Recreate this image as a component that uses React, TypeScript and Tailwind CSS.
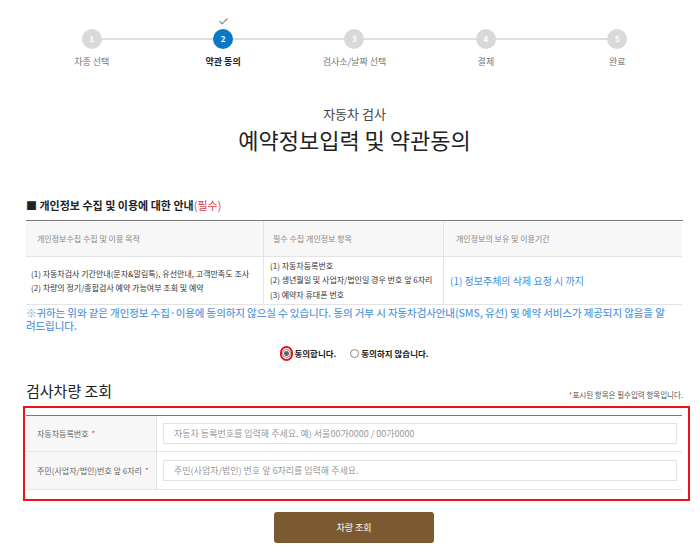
import { Check } from 'lucide-react';

const steps = [
  { no: 1, label: '차종 선택' },
  { no: 2, label: '약관 동의' },
  { no: 3, label: '검사소/날짜 선택' },
  { no: 4, label: '결제' },
  { no: 5, label: '완료' },
];

const current = 2;

function Radio({ checked }: { checked?: boolean }) {
  return (
    <span className="w-[9px] h-[9px] rounded-full border border-[#888] bg-white flex items-center justify-center">
      {checked && <span className="w-[5px] h-[5px] rounded-full bg-[#666]" />}
    </span>
  );
}

export default function App() {
  return (
    <div
      className="w-[700px] h-[545px] bg-white overflow-hidden text-[#333]"
      style={{ fontFamily: '"Noto Sans CJK KR", "Noto Sans", sans-serif' }}
    >
      <div className="ml-[26px] w-[657px]">
        {/* Steps */}
        <div className="relative pt-[16px]">
          <div className="absolute left-[66px] right-[66px] top-[38px] h-[2px] bg-[#dedede]" />
          <div className="grid grid-cols-5">
            {steps.map((s) => {
              const active = s.no === current;
              return (
                <div key={s.no} className="flex flex-col items-center">
                  <div className="h-[10px] flex items-center justify-center">
                    {active && <Check className="w-[11px] h-[11px] text-[#8a8a8a]" strokeWidth={2.5} />}
                  </div>
                  <div
                    className={`relative mt-[3px] w-[20px] h-[20px] rounded-full flex items-center justify-center text-[8px] font-bold text-white ${
                      active ? 'bg-[#0a78c8]' : 'bg-[#d9d9d9]'
                    }`}
                  >
                    {s.no}
                  </div>
                  <div
                    className={`mt-[7px] text-[9px] leading-[12px] ${
                      active ? 'text-[#222] font-bold' : 'text-[#777]'
                    }`}
                  >
                    {s.label}
                  </div>
                </div>
              );
            })}
          </div>
        </div>

        {/* Title */}
        <div className="mt-[37px] text-center">
          <div className="text-[13px] leading-[18px] text-[#444]">자동차 검사</div>
          <h1 className="mt-[1px] text-[22px] leading-[30px] text-[#222]">예약정보입력 및 약관동의</h1>
        </div>

        {/* Privacy */}
        <div className="mt-[43px] text-[11px] leading-[16px] font-bold text-[#222]">
          ■ 개인정보 수집 및 이용에 대한 안내<span className="text-[#e04040] font-normal">(필수)</span>
        </div>

        <div className="mt-[7px] border-t border-[#777] grid grid-cols-[238px_180px_238px] text-[8px]">
          <div className="h-[36px] bg-[#f7f7f7] border-b border-r border-[#e3e3e3] flex items-center pl-[11px] text-[#888]">
            개인정보수집 수집 및 이용 목적
          </div>
          <div className="h-[36px] bg-[#f7f7f7] border-b border-r border-[#e3e3e3] flex items-center pl-[9px] text-[#888]">
            필수 수집 개인정보 항목
          </div>
          <div className="h-[36px] bg-[#f7f7f7] border-b border-[#e3e3e3] flex items-center pl-[12px] text-[#888]">
            개인정보의 보유 및 이용기간
          </div>

          <div className="h-[48px] border-b border-r border-[#e3e3e3] flex flex-col justify-center pl-[5px] leading-[14px] text-[#333]">
            <div>(1) 자동차검사 기간안내(문자&amp;알림톡), 유선안내, 고객만족도 조사</div>
            <div>(2) 차량의 정기/종합검사 예약 가능여부 조회 및 예약</div>
          </div>
          <div className="h-[48px] border-b border-r border-[#e3e3e3] flex flex-col justify-center pl-[6px] leading-[14.5px] text-[#333]">
            <div>(1) 자동차등록번호</div>
            <div>(2) 생년월일 및 사업자/법인일 경우 번호 앞 6자리</div>
            <div>(3) 예약자 휴대폰 번호</div>
          </div>
          <div className="h-[48px] border-b border-[#e3e3e3] flex items-center pl-[6px] text-[10px] text-[#3f8ee0]">
            (1) 정보주체의 삭제 요청 시 까지
          </div>
        </div>

        <p className="mt-[1px] w-[640px] break-all text-[10.5px] leading-[13px] font-medium text-[#5a9be0] tracking-[-0.1px]">
          ※귀하는 위와 같은 개인정보 수집·이용에 동의하지 않으실 수 있습니다. 동의 거부 시 자동차검사안내(SMS, 유선) 및 예약 서비스가 제공되지 않음을 알려드립니다.
        </p>

        <div className="mt-[14px] h-[14px] flex items-center justify-center text-[8.5px] font-bold text-[#222]">
          <span className="w-[13px] h-[15px] rounded-full border-2 border-[#e8141c] flex items-center justify-center">
            <Radio checked />
          </span>
          <span className="ml-[1px]">동의합니다.</span>
          <span className="ml-[14px]">
            <Radio />
          </span>
          <span className="ml-[2px]">동의하지 않습니다.</span>
        </div>

        {/* Vehicle lookup */}
        <div className="mt-[21px] flex items-end justify-between">
          <h2 className="text-[15px] leading-[20px] text-[#222]">검사차량 조회</h2>
          <div className="text-[7.5px] leading-[10px] text-[#555] mb-[1px]">
            <span className="text-[#e04040]">*</span>표시된 항목은 필수입력 항목입니다.
          </div>
        </div>
      </div>

      <div className="ml-[23px] mt-[5px] w-[667px] border-2 border-[#e8141c] pt-[7px] pb-[9px] pl-[1px] pr-[6px]">
        <div className="border-t border-[#777] text-[8px]">
          <div className="flex h-[36px] border-b border-[#e8e8e8]">
            <div className="w-[131px] bg-[#f7f7f7] border-r border-[#e3e3e3] flex items-center pl-[11px] text-[#666]">
              자동차등록번호 <span className="ml-[3px] text-[#e04040]">*</span>
            </div>
            <div className="flex-1 flex items-center pl-[6px] pr-[5px]">
              <input
                className="w-full h-[21px] border border-[#e3e3e3] px-[10px] text-[9px] placeholder:text-[#999] outline-none"
                placeholder="자동차 등록번호를 입력해 주세요. 예) 서울00가0000 / 00가0000"
              />
            </div>
          </div>
          <div className="flex h-[38px] border-b border-[#e8e8e8]">
            <div className="w-[131px] bg-[#f7f7f7] border-r border-[#e3e3e3] flex items-center pl-[11px] text-[#666]">
              주민(사업자/법인)번호 앞 6자리 <span className="ml-[3px] text-[#e04040]">*</span>
            </div>
            <div className="flex-1 flex items-center pl-[6px] pr-[5px]">
              <input
                className="w-full h-[21px] border border-[#e3e3e3] px-[10px] text-[9px] placeholder:text-[#999] outline-none"
                placeholder="주민(사업자/법인) 번호 앞 6자리를 입력해 주세요."
              />
            </div>
          </div>
        </div>
      </div>

      <div className="mt-[11px] flex justify-center pl-[8px]">
        <button className="w-[160px] h-[31px] rounded-[3px] bg-[#7b5a32] text-white text-[9px]">
          차량 조회
        </button>
      </div>
    </div>
  );
}
